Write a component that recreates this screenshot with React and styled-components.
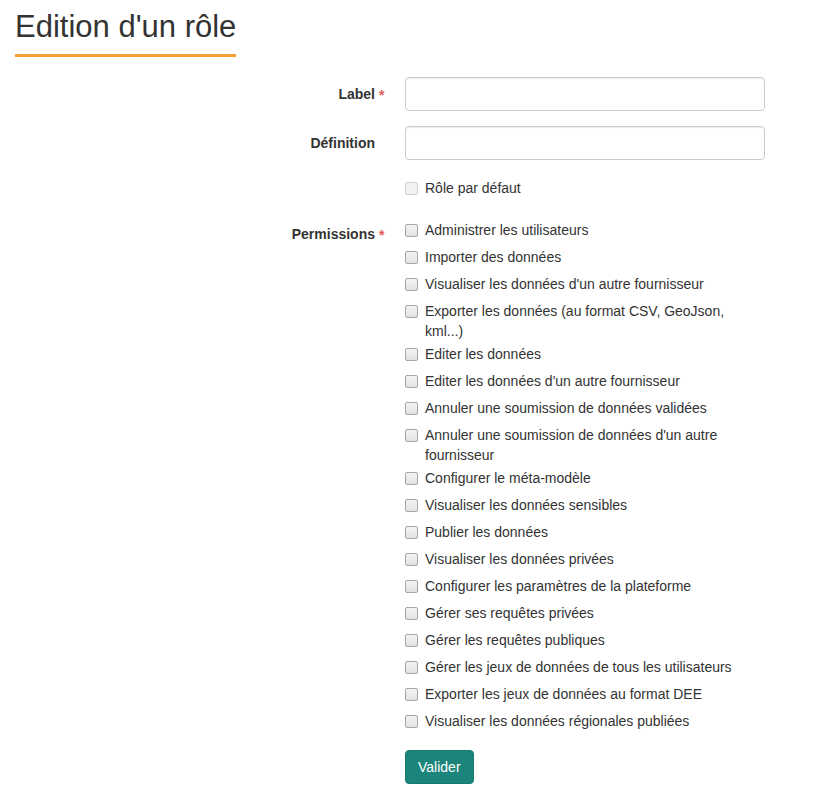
import React from 'react'
import styled, { createGlobalStyle } from 'styled-components'

const permissions = [
  "Administrer les utilisateurs",
  "Importer des données",
  "Visualiser les données d'un autre fournisseur",
  "Exporter les données (au format CSV, GeoJson, kml...)",
  "Editer les données",
  "Editer les données d'un autre fournisseur",
  "Annuler une soumission de données validées",
  "Annuler une soumission de données d'un autre fournisseur",
  "Configurer le méta-modèle",
  "Visualiser les données sensibles",
  "Publier les données",
  "Visualiser les données privées",
  "Configurer les paramètres de la plateforme",
  "Gérer ses requêtes privées",
  "Gérer les requêtes publiques",
  "Gérer les jeux de données de tous les utilisateurs",
  "Exporter les jeux de données au format DEE",
  "Visualiser les données régionales publiées",
]

const App = () => {
  return (
    <Page>
      <GlobalStyle />
      <Title>Edition d'un rôle</Title>
      <Form onSubmit={e => e.preventDefault()}>
        <Row>
          <FieldLabel>
            <Required>Label</Required>
          </FieldLabel>
          <Input type="text" />
        </Row>
        <Row>
          <FieldLabel>Définition</FieldLabel>
          <Input type="text" />
        </Row>
        <Row $top={16}>
          <span />
          <CheckList $offset={2}>
            <CheckItem>
              <Box type="checkbox" disabled />
              Rôle par défaut
            </CheckItem>
          </CheckList>
        </Row>
        <Row $top={12}>
          <FieldLabel>
            <Required>Permissions</Required>
          </FieldLabel>
          <CheckList $offset={3}>
            {permissions.map(p => (
              <CheckItem key={p}>
                <Box type="checkbox" />
                {p}
              </CheckItem>
            ))}
          </CheckList>
        </Row>
        <Row $top={12}>
          <span />
          <div>
            <Submit type="submit">Valider</Submit>
          </div>
        </Row>
      </Form>
    </Page>
  )
}

export default App

const GlobalStyle = createGlobalStyle`
  body {
    margin: 0;
    background: #fff;
    color: #333;
    font-family: "Liberation Sans", Arial, sans-serif;
    font-size: 14px;
    line-height: 20px;
  }
`

const Page = styled.div`
  padding: 10px 15px 20px;
`

const Title = styled.h1`
  display: inline-block;
  margin: 0;
  padding-bottom: 11px;
  border-bottom: 3px solid #f7a03a;
  font-size: 31px;
  line-height: 33px;
  font-weight: 400;
  color: #333;
`

const Form = styled.form`
  margin-top: 20px;
`

const Row = styled.div`
  display: grid;
  grid-template-columns: 360px 360px;
  column-gap: 30px;
  align-items: start;
  margin-top: ${p => (p.$top ?? 15)}px;

  &:first-child {
    margin-top: 0;
  }
`

const FieldLabel = styled.label`
  padding-top: 7px;
  text-align: right;
  font-weight: 700;
`

const Required = styled.span`
  position: relative;

  &::after {
    content: '*';
    position: absolute;
    left: 100%;
    top: -1px;
    margin-left: 4px;
    color: #e05a55;
    font-weight: 700;
  }
`

const Input = styled.input`
  box-sizing: border-box;
  width: 100%;
  height: 34px;
  padding: 6px 12px;
  border: 1px solid #ccc;
  border-radius: 4px;
  box-shadow: inset 0 1px 1px rgba(0, 0, 0, 0.075);
  font: inherit;
  color: #555;
`

const CheckList = styled.div`
  display: flex;
  flex-direction: column;
  padding-top: ${p => p.$offset}px;
`

const CheckItem = styled.label`
  position: relative;
  box-sizing: border-box;
  display: block;
  min-height: 27px;
  padding: 0 0 3px 20px;
  line-height: 20px;
  color: #333;
`

const Box = styled.input`
  appearance: none;
  position: absolute;
  left: 0;
  top: 4px;
  box-sizing: border-box;
  width: 13px;
  height: 13px;
  margin: 0;
  border: 1px solid #a6a6a6;
  border-radius: 2px;
  background: linear-gradient(#f4f4f4, #e2e2e2);

  &:checked::after {
    content: '';
    position: absolute;
    left: 3px;
    top: 0;
    width: 4px;
    height: 7px;
    border: solid #333;
    border-width: 0 2px 2px 0;
    transform: rotate(45deg);
  }

  &:disabled {
    border-color: #d2d2d2;
    background: #f1f1f1;
  }
`

const Submit = styled.button`
  height: 34px;
  padding: 6px 12px;
  border: 1px solid #167a70;
  border-radius: 4px;
  background: #1b857b;
  color: #fff;
  font: inherit;
  font-size: 14px;
  cursor: pointer;
`
